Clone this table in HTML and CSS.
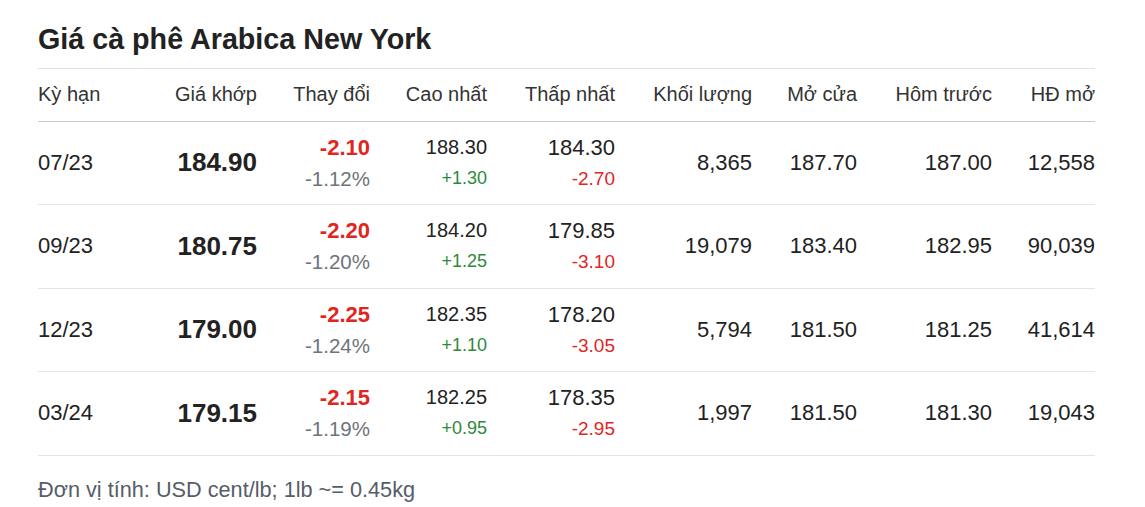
FILE: index.html
```html
<!DOCTYPE html>
<html lang="vi">
<head>
<meta charset="utf-8">
<title>Giá cà phê Arabica New York</title>
<link rel="stylesheet" href="styles.css">
</head>
<body>
<div class="wrap">
  <h2 class="title">Giá cà phê Arabica New York</h2>
  <table class="price-table">
    <colgroup>
      <col class="c1"><col class="c2"><col class="c3"><col class="c4"><col class="c5"><col class="c6"><col class="c7"><col class="c8"><col class="c9">
    </colgroup>
    <thead>
      <tr>
        <th class="left">Kỳ hạn</th>
        <th>Giá khớp</th>
        <th>Thay đổi</th>
        <th>Cao nhất</th>
        <th>Thấp nhất</th>
        <th>Khối lượng</th>
        <th>Mở cửa</th>
        <th>Hôm trước</th>
        <th>HĐ mở</th>
      </tr>
    </thead>
    <tbody>
      <tr>
        <td class="left">07/23</td>
        <td class="price">184.90</td>
        <td><div class="chg down">-2.10</div><div class="pct">-1.12%</div></td>
        <td><div class="hi">188.30</div><div class="sub up">+1.30</div></td>
        <td><div class="lo">184.30</div><div class="sub down">-2.70</div></td>
        <td>8,365</td>
        <td>187.70</td>
        <td>187.00</td>
        <td>12,558</td>
      </tr>
      <tr>
        <td class="left">09/23</td>
        <td class="price">180.75</td>
        <td><div class="chg down">-2.20</div><div class="pct">-1.20%</div></td>
        <td><div class="hi">184.20</div><div class="sub up">+1.25</div></td>
        <td><div class="lo">179.85</div><div class="sub down">-3.10</div></td>
        <td>19,079</td>
        <td>183.40</td>
        <td>182.95</td>
        <td>90,039</td>
      </tr>
      <tr>
        <td class="left">12/23</td>
        <td class="price">179.00</td>
        <td><div class="chg down">-2.25</div><div class="pct">-1.24%</div></td>
        <td><div class="hi">182.35</div><div class="sub up">+1.10</div></td>
        <td><div class="lo">178.20</div><div class="sub down">-3.05</div></td>
        <td>5,794</td>
        <td>181.50</td>
        <td>181.25</td>
        <td>41,614</td>
      </tr>
      <tr>
        <td class="left">03/24</td>
        <td class="price">179.15</td>
        <td><div class="chg down">-2.15</div><div class="pct">-1.19%</div></td>
        <td><div class="hi">182.25</div><div class="sub up">+0.95</div></td>
        <td><div class="lo">178.35</div><div class="sub down">-2.95</div></td>
        <td>1,997</td>
        <td>181.50</td>
        <td>181.30</td>
        <td>19,043</td>
      </tr>
    </tbody>
  </table>
  <p class="note">Đơn vị tính: USD cent/lb; 1lb ~= 0.45kg</p>
</div>
</body>
</html>
```

FILE: styles.css
```css
* { box-sizing: border-box; }
html, body { margin: 0; padding: 0; background: #fff; }
body {
  font-family: "Liberation Sans", Arial, sans-serif;
  color: #222;
}
.wrap {
  width: 1095px;
  padding: 22px 0 0 38px;
}
.title {
  margin: 0;
  font-size: 28.7px;
  font-weight: bold;
  color: #222;
  line-height: 34px;
  padding-bottom: 12px;
  border-bottom: 1px solid #dde0e5;
}
.price-table {
  width: 1057px;
  table-layout: fixed;
  border-collapse: collapse;
}
.c1 { width: 112px; }
.c2 { width: 107px; }
.c3 { width: 113px; }
.c4 { width: 117px; }
.c5 { width: 128px; }
.c6 { width: 137px; }
.c7 { width: 105px; }
.c8 { width: 135px; }
.c9 { width: 103px; }
.price-table th {
  font-weight: normal;
  font-size: 20px;
  color: #333;
  text-align: right;
  height: 52px;
  padding: 0;
  border-bottom: 1px solid #c8ccd2;
  vertical-align: middle;
}
.price-table td {
  font-size: 22px;
  color: #222;
  text-align: right;
  height: 83px;
  padding: 0;
  border-bottom: 1px solid #e3e6ea;
  vertical-align: middle;
}
.price-table tbody tr:nth-child(even) td { height: 84px; }
.price-table .left { text-align: left; }
.price-table td.price {
  font-size: 26px;
  font-weight: bold;
}
.chg {
  font-size: 22px;
  font-weight: bold;
  line-height: 31px;
}
.pct {
  font-size: 20.5px;
  color: #6f747a;
  line-height: 31px;
}
.hi { font-size: 20px; line-height: 31px; }
.lo { font-size: 22px; line-height: 31px; }
.sub { font-size: 18px; line-height: 31px; }
.sub.down { font-size: 19px; }
.down { color: #e0261e; }
.up { color: #2d8a3a; }
.note {
  margin: 0;
  padding-top: 21px;
  font-size: 21.7px;
  color: #565d68;
}
```
